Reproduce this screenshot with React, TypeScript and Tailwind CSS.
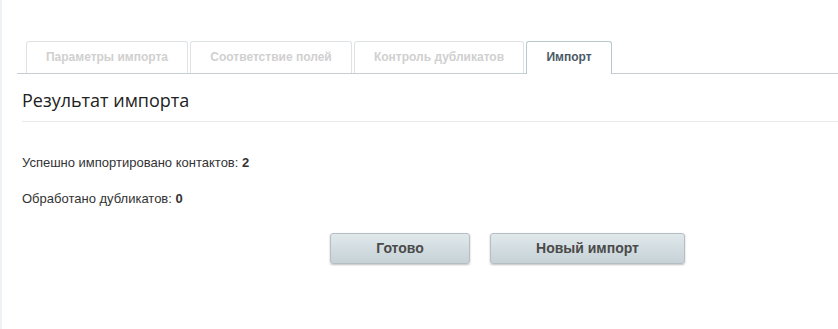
import React from 'react';

const TABS = [
  { label: 'Параметры импорта', width: 'w-[162px]', active: false },
  { label: 'Соответствие полей', width: 'w-[162px]', active: false },
  { label: 'Контроль дубликатов', width: 'w-[170px]', active: false },
  { label: 'Импорт', width: 'w-[86px]', active: true },
];

export default function App() {
  return (
    <div className="flex h-[329px] w-[838px] bg-white font-['Liberation_Sans',Arial,sans-serif]">
      {/* left edge strip */}
      <div className="w-[2px] shrink-0 bg-[#eef2f5]" />

      <div className="flex-1 pl-[15px]">
        {/* Tabs */}
        <div className="flex h-[74px] items-end gap-[2px] border-b border-[#c5d0d5] pl-[9px]">
          {TABS.map((tab) =>
            tab.active ? (
              <div
                key={tab.label}
                className={`${tab.width} -mb-px flex h-[33px] items-center justify-center rounded-t-[3px] border border-b-0 border-[#b7c8cf] bg-white pb-[2px] text-[12px] font-bold text-[#4b5a66]`}
              >
                {tab.label}
              </div>
            ) : (
              <div
                key={tab.label}
                className={`${tab.width} flex h-[32px] items-center justify-center rounded-t-[3px] border border-b-0 border-[#dfe3e5] pb-[1px] text-[12px] font-bold text-[#d0d0d0]`}
              >
                {tab.label}
              </div>
            )
          )}
        </div>

        <div className="pl-[5px]">
          {/* Heading */}
          <h1 className="mt-[14px] border-b border-[#e9e9e9] pb-[9px] font-['Open_Sans',sans-serif] text-[18px] leading-[24px] text-[#222]">
            Результат импорта
          </h1>

          {/* Results */}
          <p className="mt-[33px] text-[13px] leading-[16px] text-[#333]">
            Успешно импортировано контактов: <b>2</b>
          </p>
          <p className="mt-[20px] text-[13px] leading-[16px] text-[#333]">
            Обработано дубликатов: <b>0</b>
          </p>

          {/* Actions */}
          <div className="mt-[26px] flex gap-[20px] pl-[308px]">
            <button className="h-[31px] w-[140px] rounded-[3px] border border-[#b4bec3] bg-gradient-to-b from-[#e0e8eb] to-[#c6d2d7] text-[14px] font-bold text-[#4a4a4a] shadow-[0_1px_2px_rgba(0,0,0,0.25)]">
              Готово
            </button>
            <button className="h-[31px] w-[195px] rounded-[3px] border border-[#b4bec3] bg-gradient-to-b from-[#e0e8eb] to-[#c6d2d7] text-[14px] font-bold text-[#4a4a4a] shadow-[0_1px_2px_rgba(0,0,0,0.25)]">
              Новый импорт
            </button>
          </div>
        </div>
      </div>
    </div>
  );
}
